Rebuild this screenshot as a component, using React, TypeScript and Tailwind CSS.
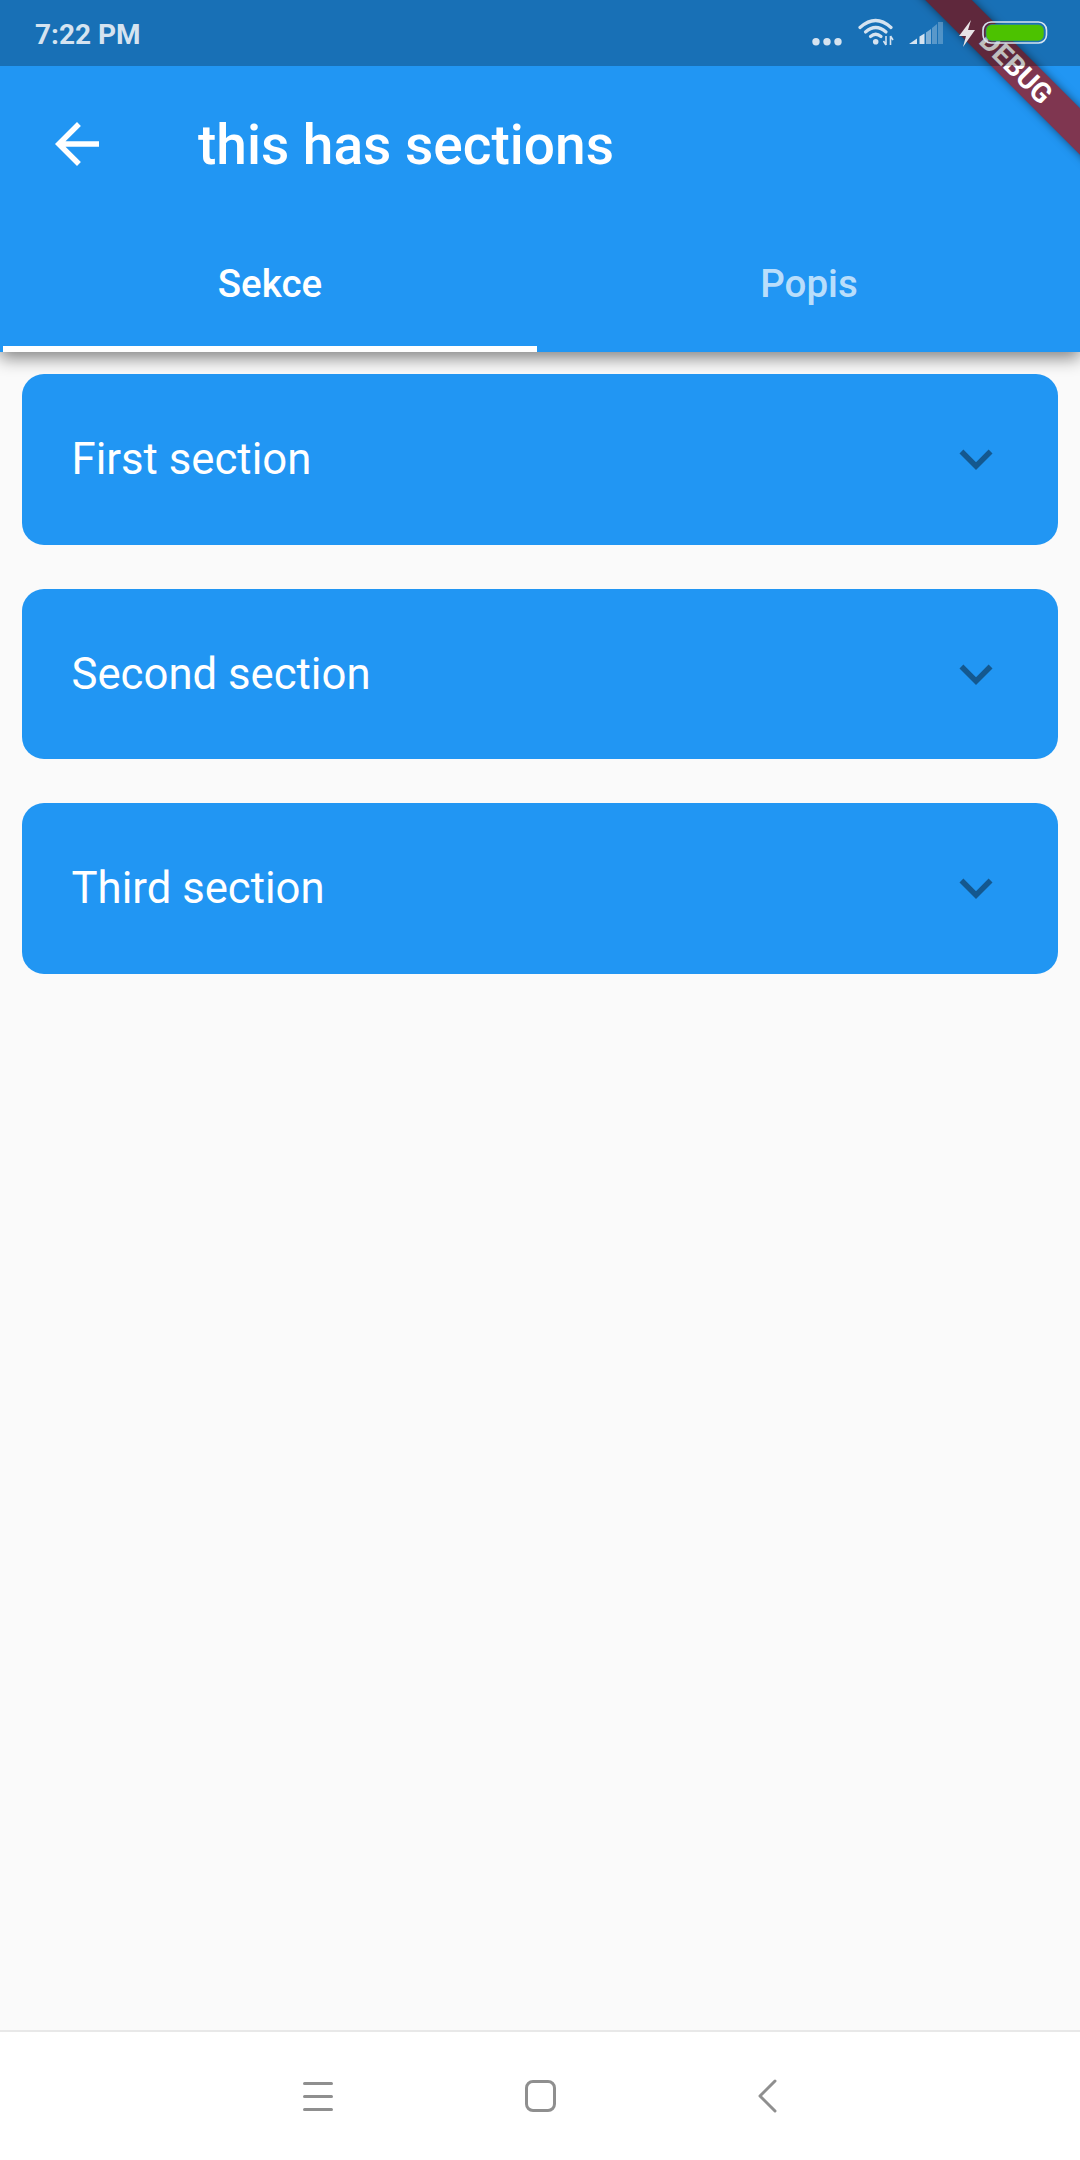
const SECTIONS = ['First section', 'Second section', 'Third section']

function StatusIcons() {
  // viewBox uses page coordinates so it's easy to check against the screenshot
  return (
    <svg width="240" height="32" viewBox="810 18 240 32" className="text-[#d5e3f0]">
      <circle cx="816" cy="41.7" r="3.7" fill="currentColor" />
      <circle cx="827" cy="41.7" r="3.7" fill="currentColor" />
      <circle cx="838" cy="41.7" r="3.7" fill="currentColor" />
      {/* wifi */}
      <g fill="none" stroke="currentColor" strokeWidth="3.2" strokeLinecap="round">
        <path d="M860 27.5 Q875.7 13.5 891 27.5" />
        <path d="M865.5 32 Q875.7 23 886 32" />
        <path d="M870.5 36.5 Q875.7 32 881 36.5" />
      </g>
      <circle cx="875.7" cy="41.7" r="2.8" fill="currentColor" />
      <path d="M886 36 V45 M883.5 41 L886 45 M890.5 45 V36 M890.5 36 L893 40" fill="none" stroke="currentColor" strokeWidth="1.6" />
      {/* signal */}
      <path d="M909 44 L917 38.5 V44 Z" fill="currentColor" />
      <path d="M919.5 36.5 L924.5 33.5 V44 H919.5 Z" fill="currentColor" />
      <path d="M926 32.5 L931 29 V44 H926 Z" fill="currentColor" opacity="0.55" />
      <path d="M938 22 L943 22 V44 H938 Z" fill="currentColor" opacity="0.3" />
      <path d="M932 28 L937 24 V44 H932 Z" fill="currentColor" opacity="0.35" />
      {/* bolt */}
      <path d="M971 20 L959 36 H966 L963 47 L975 30 H968 Z" fill="#e9e4e6" />
      {/* battery */}
      <rect x="983" y="22" width="63.5" height="21" rx="8" fill="none" stroke="#d5e3f0" strokeWidth="1.6" />
      <rect x="986" y="24.5" width="58" height="16.5" rx="6" fill="#4cc200" stroke="#2f7fa0" strokeWidth="0.7" />
    </svg>
  )
}

export default function App() {
  return (
    <div className="relative flex h-[2160px] w-[1080px] flex-col overflow-hidden bg-[#fafafa] font-['Roboto',sans-serif]">
      <header className="relative z-10 h-[352px] shrink-0 bg-[#2196f3] shadow-[0_6px_16px_rgba(0,0,0,0.48)]">
        <div className="relative z-20 flex h-[66px] items-start justify-between bg-black/25 pl-[35px] pr-[30px]">
          <span className="mt-[19px] text-[28px] leading-[32px] font-bold text-[#d5e3f0]">7:22 PM</span>
          <div className="mt-[18px]">
            <StatusIcons />
          </div>
        </div>

        {/* debug ribbon, sits under the system status bar */}
        <div className="absolute top-[51px] right-[-86px] z-10 flex h-[33px] w-[300px] rotate-45 items-center justify-center bg-[#7f3650] text-[28px] leading-none font-bold text-white shadow-[0_0_8px_rgba(0,0,0,0.5)]">
          DEBUG
        </div>

        <div className="flex h-[154px] items-center">
          <div className="flex w-[198px] shrink-0 pl-[44px]">
            <svg width="66" height="66" viewBox="0 0 24 24" className="mt-[1px] text-white">
              <path fill="currentColor" d="M20 11H7.83l5.59-5.59L12 4l-8 8 8 8 1.41-1.41L7.83 13H20v-2z" />
            </svg>
          </div>
          <h1 className="mt-[5px] text-[55px] leading-none font-medium text-white">this has sections</h1>
        </div>

        <div className="grid h-[132px] grid-cols-[540px_540px]">
          <div className="ml-[3px] mr-[3px] flex items-center justify-center border-b-[6px] border-white pt-[1px] text-[38.5px] font-medium text-white">
            Sekce
          </div>
          <div className="flex items-center justify-center pb-[5px] pr-[2px] text-[38.5px] font-medium text-white/70">
            Popis
          </div>
        </div>
      </header>

      <main className="relative z-20 flex flex-1 flex-col gap-[44px] px-[22px] pt-[22px]">
        {SECTIONS.map(title => (
          <div
            key={title}
            className="flex h-[170.5px] items-center justify-between rounded-[22px] bg-[#2196f3] pl-[49.5px] pr-[49.5px]"
          >
            <span className="mt-[2px] text-[43.7px] leading-none text-white">{title}</span>
            <svg width="66" height="66" viewBox="0 0 24 24" className="text-[#14588f]">
              <path fill="currentColor" d="M16.59 8.59L12 13.17 7.41 8.59 6 10l6 6 6-6z" />
            </svg>
          </div>
        ))}
      </main>

      <footer className="flex h-[130px] shrink-0 items-start border-t-2 border-[#e8e8e8] bg-white">
        <div className="flex w-full items-center pl-[303px] pt-[47px]">
          <div className="flex w-[30px] flex-col gap-[10px]">
            <span className="h-[3px] rounded-full bg-[#8f8f8f]" />
            <span className="h-[3px] rounded-full bg-[#8f8f8f]" />
            <span className="h-[3px] rounded-full bg-[#8f8f8f]" />
          </div>
          <span className="ml-[192px] h-[32px] w-[31px] rounded-[8px] border-[3px] border-[#8f8f8f]" />
          <svg width="20" height="34" viewBox="0 0 20 34" className="ml-[201px]">
            <path d="M18 2 L3 17 L18 32" fill="none" stroke="#8f8f8f" strokeWidth="3" strokeLinecap="round" strokeLinejoin="round" />
          </svg>
        </div>
      </footer>
    </div>
  )
}
